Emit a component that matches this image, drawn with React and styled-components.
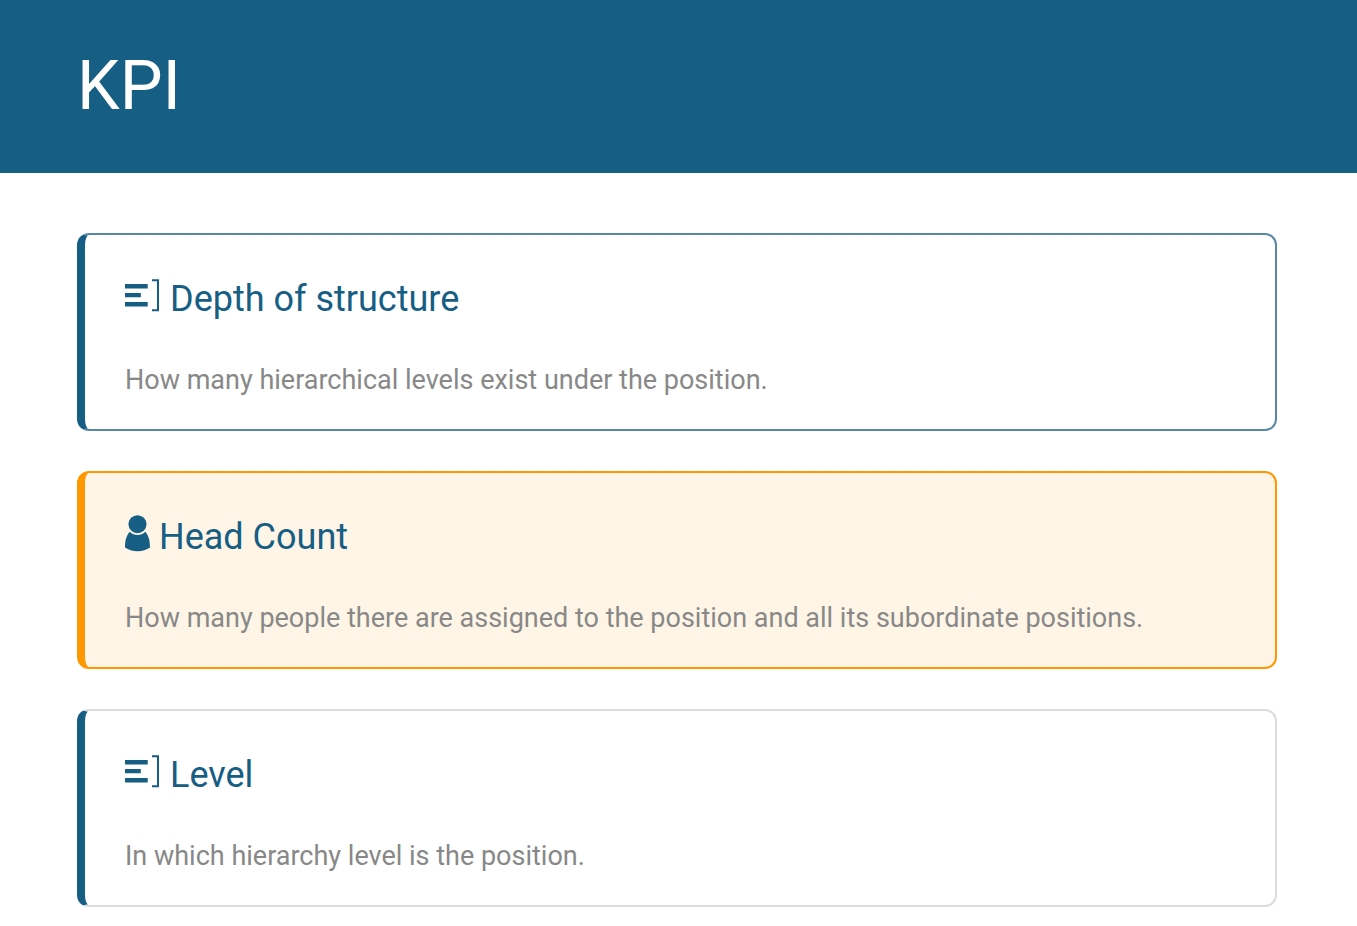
import styled, { createGlobalStyle } from 'styled-components';

const GlobalStyle = createGlobalStyle`
  * {
    box-sizing: border-box;
  }

  body {
    margin: 0;
    background: #fff;
    font-family: Roboto, sans-serif;
  }
`;

const Header = styled.header`
  padding: 46px 77px 47px;
  background: #165e83;
`;

const PageTitle = styled.h1`
  margin: 0;
  color: #fff;
  font-size: 68px;
  font-weight: 400;
  line-height: 80px;
`;

const CardList = styled.main`
  display: flex;
  flex-direction: column;
  gap: 40px;
  padding: 60px 80px 19px 77px;
`;

const Card = styled.article`
  padding: 42px 38px 31px 40px;
  border: 2px solid ${({ $border }) => $border};
  border-left: 8px solid ${({ $accent }) => $accent};
  border-radius: 12px;
  background: ${({ $background }) => $background || '#fff'};
`;

const CardTitle = styled.h2`
  display: flex;
  align-items: flex-start;
  gap: 9px;
  margin: 0 0 41px;
  color: #165e83;
  font-size: 36px;
  font-weight: 400;
  line-height: 44px;
`;

const Icon = styled.svg`
  flex: none;
  display: block;
`;

const Description = styled.p`
  margin: 0;
  color: #888;
  font-size: 27px;
  line-height: 36px;
`;

const LevelsIcon = () => (
  <Icon width="36" height="38" viewBox="0 0 36 38" fill="currentColor" aria-hidden="true">
    <path d="M0 7h22.700v4.400H0zM0 16h15.800v4.300H0zM0 25h22.700v4.400H0z" />
    <path d="M27 3.200h6v30h-6" fill="none" stroke="currentColor" strokeWidth="2" />
  </Icon>
);

const PersonIcon = () => (
  <Icon width="25" height="38" viewBox="0 0 25 38" fill="currentColor" aria-hidden="true">
    <circle cx="12.5" cy="9.2" r="9" />
    <path d="M4.800 16.800Q8 20 12.500 20T20.200 16.800C23.700 20.500 25 26 25 32.500Q20 36.200 12.500 36.200T0 32.500C0 26 1.300 20.500 4.800 16.800Z" />
  </Icon>
);

const kpis = [
  {
    title: 'Depth of structure',
    description: 'How many hierarchical levels exist under the position.',
    icon: LevelsIcon,
    accent: '#165e83',
    border: '#5789a5',
  },
  {
    title: 'Head Count',
    description: 'How many people there are assigned to the position and all its subordinate positions.',
    icon: PersonIcon,
    accent: '#ff9800',
    border: '#ff9800',
    background: '#fff5e6',
  },
  {
    title: 'Level',
    description: 'In which hierarchy level is the position.',
    icon: LevelsIcon,
    accent: '#165e83',
    border: '#dcdcdc',
  },
];

const KpiCard = ({ kpi }) => {
  const KpiIcon = kpi.icon;
  return (
    <Card $accent={kpi.accent} $border={kpi.border} $background={kpi.background}>
      <CardTitle>
        <KpiIcon />
        {kpi.title}
      </CardTitle>
      <Description>{kpi.description}</Description>
    </Card>
  );
};

const App = () => {
  return (
    <>
      <GlobalStyle />
      <Header>
        <PageTitle>KPI</PageTitle>
      </Header>
      <CardList>
        {kpis.map((kpi) => (
          <KpiCard key={kpi.title} kpi={kpi} />
        ))}
      </CardList>
    </>
  );
};

export default App;
